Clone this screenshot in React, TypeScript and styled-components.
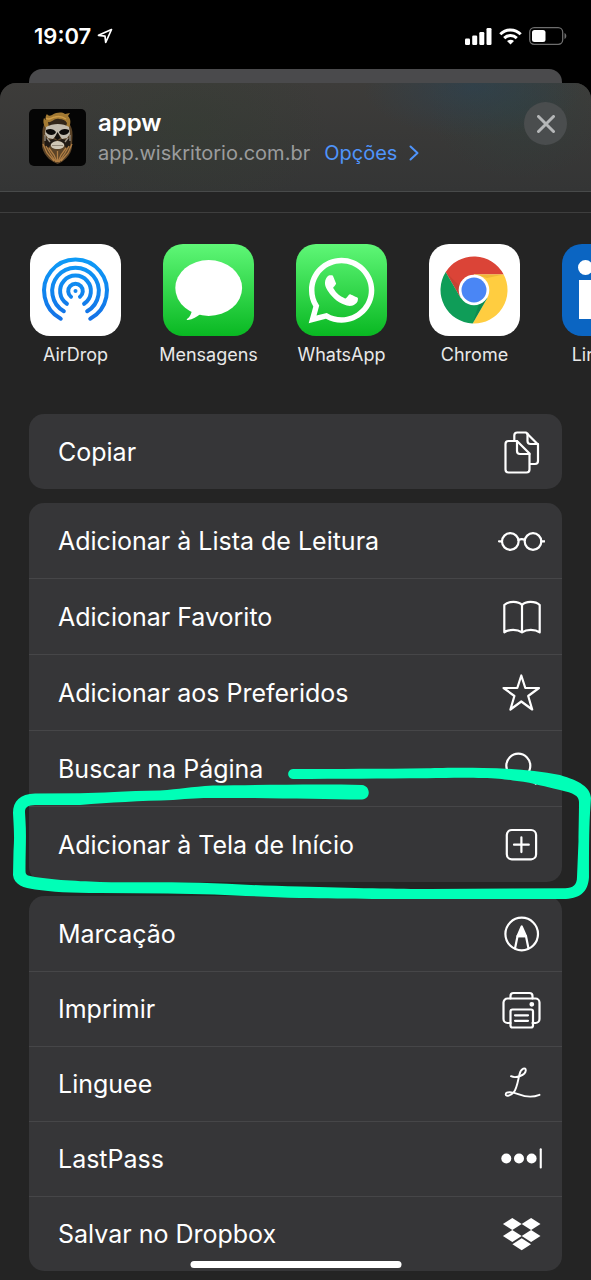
import React from "react";
import styled, { createGlobalStyle } from "styled-components";
import { FaWhatsapp } from "react-icons/fa";

const GlobalStyle = createGlobalStyle`
  *, *::before, *::after { box-sizing: border-box; }
  html, body { margin: 0; background: #000; }
  body {
    font-family: Inter, "Liberation Sans", sans-serif;
    color: #fff;
    overflow-x: hidden;
  }
  button { font: inherit; color: inherit; border: 0; padding: 0; background: none; cursor: pointer; }
  svg { display: block; flex: none; }
`;

const Screen = styled.div`
  min-height: 100vh;
  display: flex;
  flex-direction: column;
  background: #000;
`;

const StatusBar = styled.div`
  height: 69px;
  padding: 3px 24px 0 34px;
  display: flex;
  align-items: center;
  justify-content: space-between;
`;

const Clock = styled.div`
  display: flex;
  align-items: center;
  gap: 6px;
  font-size: 22px;
  line-height: 28px;
  font-weight: 600;
`;

const StatusIcons = styled.div`
  display: flex;
  align-items: center;
  gap: 7px;
`;

const BackCard = styled.div`
  height: 14px;
  margin: 0 29px;
  border-radius: 13px 13px 0 0;
  background: #4a4a4c;
`;

const Sheet = styled.main`
  flex: 1;
  border-radius: 16px 16px 0 0;
  background: #242424;
  overflow: hidden;
`;

const Header = styled.header`
  height: 109px;
  padding: 0 24px 0 29px;
  display: flex;
  align-items: center;
  border-bottom: 1px solid #484a4a;
  background:
    radial-gradient(ellipse 110px 50px at 80% 4%, rgba(40, 68, 88, 0.5), transparent),
    radial-gradient(ellipse 90px 70px at 88% 24%, rgba(40, 70, 66, 0.3), transparent),
    radial-gradient(ellipse 140px 90px at 32% 40%, rgba(50, 62, 48, 0.4), transparent),
    linear-gradient(#3d3c3a, #343535);
`;

const Titles = styled.div`
  flex: 1;
  min-width: 0;
  padding: 2px 0 0 12px;
`;

const Title = styled.h1`
  margin: 0;
  font-size: 24px;
  line-height: 30px;
  font-weight: 600;
`;

const Subtitle = styled.div`
  display: flex;
  align-items: center;
  gap: 14px;
  font-size: 20px;
  line-height: 30px;
  white-space: nowrap;
  color: #9b9c9d;
`;

const OptionsButton = styled.button`
  display: flex;
  align-items: center;
  gap: 12px;
  color: #4f94fb;
`;

const CloseButton = styled.button`
  width: 43px;
  height: 43px;
  margin-bottom: 27px;
  border-radius: 50%;
  display: grid;
  place-items: center;
  background: #4a4d4e;
`;

const Divider = styled.div`
  height: 21px;
  border-bottom: 1px solid #3e3e3e;
`;

const AppRow = styled.nav`
  display: flex;
  gap: 42px;
  padding: 31px 29px 0 30px;
  overflow: hidden;
`;

const AppButton = styled.button`
  flex: none;
  width: 91px;
  display: flex;
  flex-direction: column;
  align-items: center;
  font-size: 18px;
  line-height: 24px;
  white-space: nowrap;
  color: #e9e9e9;
`;

const Tile = styled.span<{ $fill: string }>`
  width: 91px;
  height: 92px;
  margin-bottom: 7px;
  border-radius: 20px;
  display: grid;
  place-items: center;
  background: ${(p) => p.$fill};
  color: #fff;
`;

const Groups = styled.div`
  display: flex;
  flex-direction: column;
  gap: 14px;
  padding: 47px 29px 9px;
`;

const Group = styled.section<{ $rowHeight: number }>`
  border-radius: 15px;
  background: #363638;
  --row: ${(p) => p.$rowHeight}px;
`;

const Row = styled.div`
  position: relative;
  height: var(--row);
  border-top: 1px solid #464648;
  &:first-child { height: 75px; border-top: 0; }
`;

const Action = styled.button`
  width: 100%;
  height: 100%;
  padding: 0 17px 0 29px;
  display: flex;
  align-items: center;
  justify-content: space-between;
  font-size: 25px;
  text-align: left;
  white-space: nowrap;
`;

const Highlight = styled.svg`
  position: absolute;
  z-index: 2;
  left: -29px;
  top: -46px;
  width: calc(100% + 58px);
  height: 145px;
  pointer-events: none;
`;

const HomeIndicator = styled.div`
  position: fixed;
  z-index: 3;
  left: 50%;
  bottom: 12px;
  width: 211px;
  height: 7px;
  transform: translateX(-50%);
  border-radius: 4px;
  background: #fff;
`;

const RowIcon = ({ children }: { children: React.ReactNode }) => (
  <svg width="48" height="48" viewBox="0 0 48 48" fill="none" stroke="#fff" strokeWidth="2.2" strokeLinecap="round" strokeLinejoin="round" aria-hidden="true">
    {children}
  </svg>
);

const CopyIcon = (
  <RowIcon>
    <path d="M11.5 13H20l12.5 12.5v16a3 3 0 0 1-3 3h-18a3 3 0 0 1-3-3V16a3 3 0 0 1 3-3Z" />
    <path d="M20 13v10a3 3 0 0 0 3 3h9.500" />
    <path d="M17.300 12.500V7.500a3 3 0 0 1 3-3H29l12 12V33a3 3 0 0 1-3 3h-5" />
    <path d="M30.500 5.500v7.500a3 3 0 0 0 3 3H41" />
  </RowIcon>
);
const GlassesIcon = (
  <RowIcon>
    <circle cx="13.300" cy="24.500" r="8.300" />
    <circle cx="36" cy="24.500" r="8.300" />
    <path d="M2 24.300h3M44.300 24.300h3M21.500 23c2-1 4.500-1 6.400 0" />
  </RowIcon>
);
const BookIcon = (
  <RowIcon>
    <path d="M25 12C21.500 7.800 11.500 7.800 7.300 12v27.300c4.700-3.200 13-3.200 17.700 0 4.700-3.200 13-3.200 17.700 0V12C38.500 7.800 28.500 7.800 25 12v27" />
  </RowIcon>
);
const StarIcon = (
  <RowIcon>
    <path d="M24.300 6.500 28.300 19H42l-10.800 8 4 13.500-10.900-8-10.900 8 4-13.500L6.600 19h13.700Z" />
  </RowIcon>
);
const SearchIcon = (
  <RowIcon>
    <circle cx="21.300" cy="20.700" r="12" />
    <path d="m30 30 8.700 8.700" />
  </RowIcon>
);
const AddIcon = (
  <RowIcon>
    <rect x="9.800" y="9" width="29.300" height="29.300" rx="5" />
    <path d="M24.400 16.300v14.800M17 23.700h14.800" />
  </RowIcon>
);
const MarkupIcon = (
  <RowIcon>
    <circle cx="24.700" cy="24" r="16.300" />
    <path d="M20.500 26.200 18 38.500M29 26.200l2.500 12.300M20.500 26.200H29" />
    <path d="m24.700 16.500-4.200 9.700H29Z" fill="#fff" />
  </RowIcon>
);
const PrinterIcon = (
  <RowIcon>
    <path d="M13.500 38h-3a4 4 0 0 1-4-4V17.500a4 4 0 0 1 4-4h28a4 4 0 0 1 4 4V34a4 4 0 0 1-4 4h-3" />
    <path d="M13.500 13.500V11a3 3 0 0 1 3-3h16a3 3 0 0 1 3 3v2.500" />
    <rect x="13.500" y="24.500" width="22.500" height="18" rx="2" />
    <path d="M18 30.300h13M18 35.800h13" />
    <circle cx="34.800" cy="19.300" r="1.300" fill="#fff" />
  </RowIcon>
);
const LingueeIcon = (
  <RowIcon>
    <path strokeWidth="1.900" d="M14 16.200c5 2.600 14.500-1.200 14.800-5.800.2-3.600-4.800-2.200-6.300 3.800-1.700 7-2.500 14-5.700 18-2.800 3.500-8 4.800-8.100 2.300-.1-3.400 7-2.600 13.300-.1 7 2.700 13.500 3.300 20.500.4" />
  </RowIcon>
);
const LastPassIcon = (
  <RowIcon>
    <g fill="#fff" stroke="none">
      <circle cx="9.300" cy="23.500" r="5" />
      <circle cx="22" cy="23.500" r="5" />
      <circle cx="34.600" cy="23.500" r="5" />
      <rect x="42.700" y="13.300" width="2.100" height="20.300" rx="1" />
    </g>
  </RowIcon>
);
const DropboxIcon = (
  <RowIcon>
    <g fill="#fff" stroke="none">
      <path d="m15.300 8 9.400 6-9.400 6-9.400-6Z" />
      <path d="m34.100 8 9.400 6-9.400 6-9.400-6Z" />
      <path d="m15.300 20 9.400 6-9.400 6-9.400-6Z" />
      <path d="m34.100 20 9.400 6-9.400 6-9.400-6Z" />
      <path d="m24.700 28.300 9.300 6-9.300 6-9.300-6Z" />
    </g>
  </RowIcon>
);

const ring = (r: number, deg: number) => {
  const a = (deg * Math.PI) / 180;
  const dx = r * Math.sin(a);
  const y = 47 + r * Math.cos(a);
  return `M${45.5 - dx} ${y}A${r} ${r} 0 1 1 ${45.5 + dx} ${y}`;
};

const AirDropIcon = (
  <svg width="91" height="92" viewBox="0 0 91 92" fill="none" aria-hidden="true">
    <defs>
      <linearGradient id="airdrop" gradientUnits="userSpaceOnUse" x1="0" y1="14" x2="0" y2="78">
        <stop offset="0" stopColor="#0d9bf7" />
        <stop offset="1" stopColor="#1470e6" />
      </linearGradient>
    </defs>
    <g stroke="url(#airdrop)" strokeWidth="4" strokeLinecap="round">
      <path d={ring(31.4, 28)} />
      <path d={ring(23.3, 30)} />
      <path d={ring(15.4, 34)} />
      <path d={ring(7.3, 38)} />
    </g>
    <circle cx="45.500" cy="47" r="2" fill="#1486ee" />
  </svg>
);

const MessagesIcon = (
  <svg width="91" height="92" viewBox="0 0 91 92" fill="#fff" aria-hidden="true">
    <ellipse cx="45.700" cy="44" rx="33.400" ry="28" />
    <path d="M29 66c-.5 3.500-2 7-4.700 8.800-1 .8-.6 1.400.6 1.200 5-.8 9-3 12.500-6Z" />
  </svg>
);

const ChromeIcon = (
  <svg width="91" height="92" viewBox="0 0 91 92" aria-hidden="true">
    <path fill="#db4437" d="M16.700 28.100A33.500 33.500 0 0 1 74.700 30.500H45L31.600 53.800Z" />
    <path fill="#ffcd40" d="M74.700 30.500A33.500 33.500 0 0 1 43.600 79.500L58.400 53.800 45 30.500Z" />
    <path fill="#0f9d58" d="M43.600 79.500A33.500 33.500 0 0 1 16.700 28.100L31.600 53.800H58.400Z" />
    <path fill="#b8402f" opacity=".5" d="m16.700 28.100 14.900 25.700 1-9.800Z" />
    <path fill="#e2a62c" opacity=".5" d="M45 30.500h29.700L58 34Z" />
    <path fill="#0b7a45" opacity=".5" d="m43.600 79.500 14.800-25.700L50 60Z" />
    <circle cx="45" cy="46" r="15.300" fill="#fff" />
    <circle cx="45" cy="46" r="12.500" fill="#4a86f5" />
  </svg>
);

const LinkedInIcon = (
  <svg width="91" height="92" viewBox="0 0 91 92" fill="#fff" aria-hidden="true">
    <circle cx="23.500" cy="23.500" r="7.500" />
    <path d="M17 36h13v39H17zM38 36h12v6c3-5 7-7 12-7 11 0 14 7 14 18v22H63V56c0-6-1-10-6-10s-7 4-7 10v19H38Z" />
  </svg>
);

const Avatar = () => (
  <svg width="57" height="57" viewBox="0 0 57 57" role="img" aria-label="appw">
    <rect width="57" height="57" rx="5" fill="#050505" />
    <path d="M16 14c-2 3-3 7-2.500 12L13 38c1 5 4 9 7 12 3 2 6 4 8.500 5 3-1 6-3 9-6 3-3 5-7 5.500-11l.5-12c0-5-1-8-3-11Z" fill="#5b4327" />
    <path d="M17 19c-3-3-3-8-2-10l2 2c-1-3 0-5 1-6 1 2 3 2 5 1 5-3 10-3 13-1l5-1-2 3c3 3 3 7 1 12l-5-3c-6-2-12-1-18 3Z" fill="#a37a33" />
    <path d="M19 13c4 1 6-4 11-3 4 0 6 1 8 4l-1 4c-6-2-11-2-17 1Z" fill="#33271a" />
    <path d="M17 9c3 3 6-1 9-1 4-1 8 0 11 2" fill="none" stroke="#cf9c48" strokeWidth="1.500" />
    <path d="M17 18c7-4 17-4 23 0l1 7-3 4-5 1-4-6-5 6-5-1-3-4Z" fill="#c3bcae" />
    <path d="M17 21c4-2 8-1 10 2-1 4-8 4-10 0ZM40 21c-4-2-8-1-10 2 1 4 8 4 10 0Z" fill="#0d0b0a" />
    <path d="m28.500 23-3 6 3 2 3-2Z" fill="#14100d" />
    <path d="M15 27c3 3 6 5 9 3l4.500 2 4.500-2c4 2 7 0 9-3l-1 10c-3 2-4 2-5 0-3-6-12-6-15 0-2 2-4 1-5 0Z" fill="#211a15" />
    <path d="M18 29l3 4M39 29l-3 4M16 26v6M41 26v6" stroke="#9c9284" strokeWidth="1.300" />
    <path d="M22 35c3-4 10-4 13 0 1 3-2 5-6.500 5S21 38 22 35Z" fill="#cfc6b5" />
    <path d="M23 36.500h11" stroke="#84796a" strokeWidth=".8" />
    <path d="m14 35 4 9 7 8M17 37l4 7 6 9M20 39l5 7 3 7M43 35l-4 9-7 8M40 37l-4 7-6 9M37 39l-5 7-3 7M28.500 42v11" fill="none" stroke="#b07e44" strokeWidth="1.300" />
  </svg>
);

const apps = [
  { name: "AirDrop", fill: "#fff", icon: AirDropIcon },
  { name: "Mensagens", fill: "linear-gradient(#5ff777, #09b822)", icon: MessagesIcon },
  { name: "WhatsApp", fill: "linear-gradient(#5ff777, #09b822)", icon: <FaWhatsapp size={75} aria-hidden="true" /> },
  { name: "Chrome", fill: "#fff", icon: ChromeIcon },
  { name: "LinkedIn", fill: "#0b65c2", icon: LinkedInIcon },
];

type Item = { label: string; icon: React.ReactNode; highlighted?: boolean };

const groups: { rowHeight: number; items: Item[] }[] = [
  { rowHeight: 75, items: [{ label: "Copiar", icon: CopyIcon }] },
  {
    rowHeight: 76,
    items: [
      { label: "Adicionar à Lista de Leitura", icon: GlassesIcon },
      { label: "Adicionar Favorito", icon: BookIcon },
      { label: "Adicionar aos Preferidos", icon: StarIcon },
      { label: "Buscar na Página", icon: SearchIcon },
      { label: "Adicionar à Tela de Início", icon: AddIcon, highlighted: true },
    ],
  },
  {
    rowHeight: 75,
    items: [
      { label: "Marcação", icon: MarkupIcon },
      { label: "Imprimir", icon: PrinterIcon },
      { label: "Linguee", icon: LingueeIcon },
      { label: "LastPass", icon: LastPassIcon },
      { label: "Salvar no Dropbox", icon: DropboxIcon },
    ],
  },
];

const MarkerStroke = () => (
  <Highlight viewBox="0 760 591 145" preserveAspectRatio="none" aria-hidden="true">
    <path
      fill="#00ffb7"
      d="M362 784C320 783 260 784 213 784.500C190 786 180 788 160 789.500C125 790 100 792 80 792.300L35 792.500C20 793 13 800 13 812C14 830 14.500 835 13.500 850L13 874C14 884 24 887 35 888.500C52 891 70 892 100 892L167 892.500C220 893 260 896 300 897C350 898 400 898 430 898L563 898C579 898 588 892 589 876C589 850 589 830 590 812L591 797C590 786 580 780 560 774C535 769 510 767.500 483 767C460 766.500 440 767 427 767.300C380 768 340 768 293 768C286.500 768.500 286.500 777.500 293 778C340 778 380 777.500 427 777.300C450 776.500 470 776.500 483 777C500 777.500 510 779 517 780C535 782 545 786 560 789C574 792 579 795 579 801C579 815 578.500 830 578.500 840L577 876C577 884 573 887 565 887.300L430 888C400 888 350 887 300 885.500C260 885 230 882.500 200 881.700C160 881 130 881.500 100 881C75 880 45 878.500 28 874.500C25.500 873 25.500 872 25.500 868C25.500 850 26.500 835 25.500 820L25 811C25 806 28 804.500 35 804L80 804C110 801.500 140 800 173 799C190 797.500 200 797 213 797C260 796.500 320 798.500 362 798.500C371 798 371 785 362 784Z"
    />
  </Highlight>
);

export default function App() {
  return (
    <>
      <GlobalStyle />
      <Screen>
        <StatusBar>
          <Clock>
            19:07
            <svg width="16" height="16" viewBox="0 0 16 16" fill="none" stroke="#fff" strokeWidth="1.700" strokeLinejoin="round" aria-hidden="true">
              <path d="M14.500 1.500 1.500 7.300l6.500.9.700 6.300Z" />
            </svg>
          </Clock>
          <StatusIcons>
            <svg width="27" height="17" viewBox="0 0 27 17" fill="#fff" aria-hidden="true">
              <rect x="0" y="10.500" width="5" height="6.500" rx="1.200" />
              <rect x="7.200" y="7.500" width="5" height="9.500" rx="1.200" />
              <rect x="14.300" y="4" width="5" height="13" rx="1.200" />
              <rect x="21.500" y="0" width="5" height="17" rx="1.200" />
            </svg>
            <svg width="23" height="17" viewBox="0 0 23 17" fill="none" stroke="#fff" strokeWidth="3" aria-hidden="true">
              <path d="M1.300 6.200c5.700-5.700 14.700-5.700 20.400 0" />
              <path d="M5.200 10.200c3.600-3.500 9-3.500 12.600 0" />
              <path d="M11.500 16.500 8 13.100c2-1.800 5-1.800 7 0Z" fill="#fff" stroke="none" />
            </svg>
            <svg width="38" height="18" viewBox="0 0 38 18" aria-hidden="true">
              <rect x=".7" y=".7" width="33" height="16.600" rx="4.500" fill="none" stroke="#6e6e6e" strokeWidth="1.300" />
              <rect x="3" y="3" width="13.500" height="12" rx="2.500" fill="#fff" />
              <path d="M35.500 6v6c2.400-.8 2.400-5.200 0-6Z" fill="#6e6e6e" />
            </svg>
          </StatusIcons>
        </StatusBar>
        <BackCard />
        <Sheet>
          <Header>
            <Avatar />
            <Titles>
              <Title>appw</Title>
              <Subtitle>
                app.wiskritorio.com.br
                <OptionsButton type="button">
                  Opções
                  <svg width="10" height="16" viewBox="0 0 10 16" fill="none" stroke="currentColor" strokeWidth="2" strokeLinecap="round" strokeLinejoin="round" aria-hidden="true">
                    <path d="m1.500 1.500 7 6.500-7 6.500" />
                  </svg>
                </OptionsButton>
              </Subtitle>
            </Titles>
            <CloseButton type="button" aria-label="Fechar">
              <svg width="18" height="18" viewBox="0 0 18 18" stroke="#b5b7b8" strokeWidth="3" strokeLinecap="round" aria-hidden="true">
                <path d="m1.500 1.500 15 15M16.500 1.500l-15 15" />
              </svg>
            </CloseButton>
          </Header>
          <Divider />
          <AppRow>
            {apps.map((app) => (
              <AppButton type="button" key={app.name}>
                <Tile $fill={app.fill}>{app.icon}</Tile>
                {app.name}
              </AppButton>
            ))}
          </AppRow>
          <Groups>
            {groups.map((group) => (
              <Group key={group.items[0].label} $rowHeight={group.rowHeight}>
                {group.items.map((item) => (
                  <Row key={item.label}>
                    <Action type="button">
                      {item.label}
                      {item.icon}
                    </Action>
                    {item.highlighted && <MarkerStroke />}
                  </Row>
                ))}
              </Group>
            ))}
          </Groups>
        </Sheet>
        <HomeIndicator />
      </Screen>
    </>
  );
}
